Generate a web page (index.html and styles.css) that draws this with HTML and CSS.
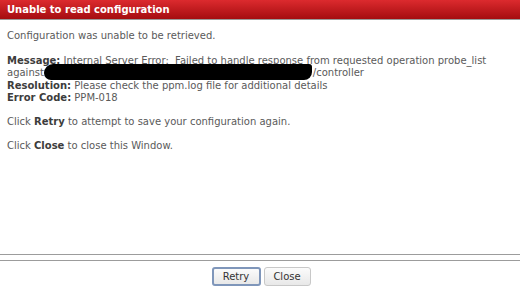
FILE: index.html
```html
<!DOCTYPE html>
<html lang="en">
<head>
    <meta charset="UTF-8">
    <title>Unable to read configuration</title>
    <link rel="stylesheet" href="styles.css">
</head>
<body>
    <div class="dialog">
        <div class="dialog-title">Unable to read configuration</div>
        <div class="dialog-body">
            <p class="intro">Configuration was unable to be retrieved.</p>
            <p>
                <b>Message:</b> Internal Server Error:&nbsp; Failed to handle response from requested operation probe_list<br>
                against<span class="redacted"></span>/controller<br>
                <b>Resolution:</b> Please check the ppm.log file for additional details<br>
                <b>Error Code:</b> PPM-018
            </p>
            <p>Click <b>Retry</b> to attempt to save your configuration again.</p>
            <p>Click <b>Close</b> to close this Window.</p>
        </div>
        <div class="dialog-footer">
            <div class="footer-bar">
                <button class="btn btn-focus">Retry</button>
                <button class="btn">Close</button>
            </div>
        </div>
    </div>
</body>
</html>
```

FILE: styles.css
```css
html, body {
    margin: 0;
    padding: 0;
    background-color: #ffffff;
}
body {
    font-family: 'DejaVu Sans', Verdana, sans-serif;
    font-size: 10px;
    color: #5a5a5a;
}
.dialog {
    width: 520px;
    height: 295px;
    display: flex;
    flex-direction: column;
}
.dialog-title {
    height: 19px;
    line-height: 19px;
    padding-left: 7px;
    color: #fff;
    font-weight: bold;
    font-size: 10px;
    background: linear-gradient(to bottom, #dc2a2e, #a50d10);
    border-bottom: 1px solid #9a9a9a;
}
.dialog-body {
    flex: 1;
    padding: 10px 7px 0;
}
.dialog-body p {
    margin: 0 0 12px;
    line-height: 12px;
}
.dialog-body p.intro {
    margin-bottom: 13px;
}
.dialog-body b {
    color: #3c3c3c;
}
.redacted {
    display: inline-block;
    width: 268px;
    height: 16px;
    margin: -4px 1px 0 0;
    vertical-align: -4px;
    background: #000;
    border-radius: 9px 3px 8px 7px;
}
.dialog-footer {
    height: 41px;
    box-sizing: border-box;
    border-top: 1px solid #9c9c9c;
}
.footer-bar {
    margin-top: 5px;
    border-top: 1px solid #9c9c9c;
    padding-top: 6px;
    display: flex;
    justify-content: center;
    gap: 3px;
    padding-left: 2px;
}
.btn {
    height: 19px;
    width: 47px;
    padding: 0;
    font-family: 'DejaVu Sans', Verdana, sans-serif;
    font-size: 10px;
    color: #333;
    background: linear-gradient(to bottom, #fbfbfb, #e8e8e8);
    border: 1px solid #c8c8c8;
    border-radius: 3px;
}
.btn-focus {
    width: 49px;
    border: 2px solid #7f96ba;
}
```
